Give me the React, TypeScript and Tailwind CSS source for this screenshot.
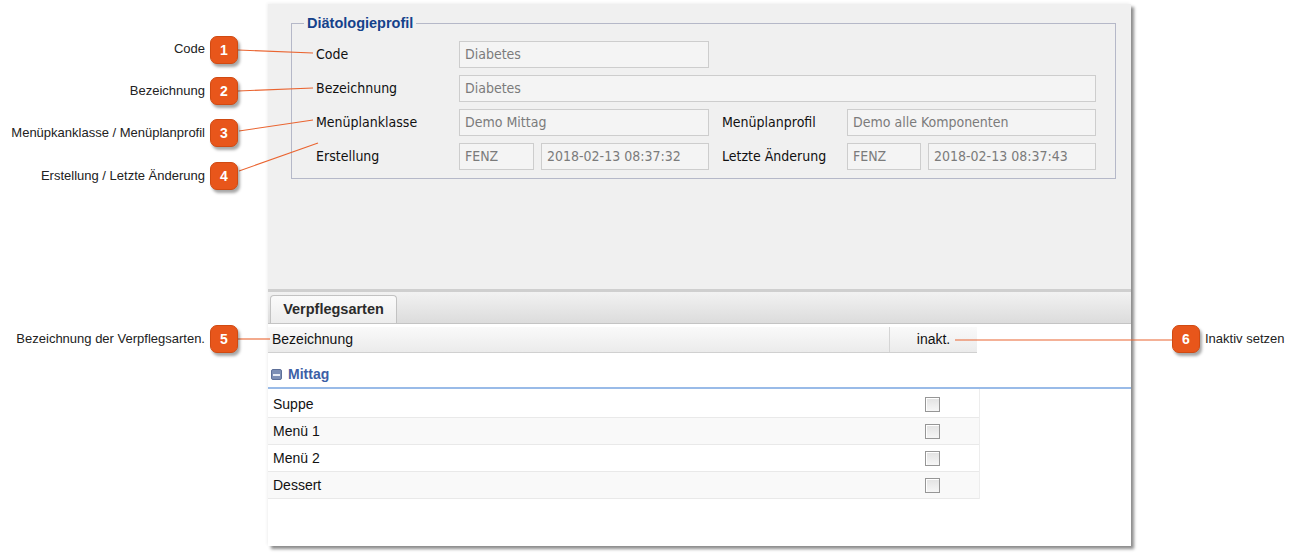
import React from "react";

const formFont = { fontFamily: '"DejaVu Sans Condensed", "Liberation Sans", Arial, sans-serif' };

function Field({ w, children }: { w: string; children: React.ReactNode }) {
  return (
    <div
      className={`${w} h-[27px] shrink-0 border border-[#cdcdcd] bg-[#f4f4f4] pl-[5px] flex items-center text-[14px] text-[#7b7b7b]`}
      style={formFont}
    >
      {children}
    </div>
  );
}

function Label({ w, children }: { w: string; children: React.ReactNode }) {
  return (
    <div className={`${w} shrink-0 text-[14px] text-[#111] -mt-[1px]`} style={formFont}>
      {children}
    </div>
  );
}

function Badge({ n, x, y }: { n: number; x: number; y: number }) {
  return (
    <div
      className="absolute w-[28px] h-[28px] rounded-[7px] bg-[#e8561b] border border-[#d04a12] shadow-[2px_3px_3px_rgba(0,0,0,0.35)] flex items-center justify-center text-white font-bold text-[14px]"
      style={{ left: x - 14, top: y - 14, fontFamily: '"Liberation Sans", Arial, sans-serif' }}
    >
      {n}
    </div>
  );
}

function Callout({ text, y }: { text: string; y: number }) {
  return (
    <div
      className="absolute right-[1095px] text-[13px] text-[#222] leading-[16px] whitespace-nowrap"
      style={{ top: y - 8, fontFamily: '"Liberation Sans", Arial, sans-serif' }}
    >
      {text}
    </div>
  );
}

function Checkbox() {
  return (
    <div className="w-[15px] h-[15px] border border-[#969696] bg-gradient-to-b from-[#e2e2e2] to-[#f6f6f6] shadow-[inset_1px_1px_0_#fff]" />
  );
}

export default function App() {
  const rows = ["Suppe", "Menü 1", "Menü 2", "Dessert"];
  return (
    <div className="relative w-[1300px] h-[555px] bg-white overflow-hidden flex">
      <div className="w-[268px] shrink-0" />
      <div
        className="mt-[4px] w-[863px] h-[542px] shrink-0 flex flex-col bg-white shadow-[3px_3px_3px_rgba(0,0,0,0.45),-1px_-1px_3px_rgba(0,0,0,0.06)]"
      >
        {/* top form section */}
        <div className="h-[285px] shrink-0 bg-[#f0f0f0] pt-[11px] pl-[23px]">
          <fieldset className="w-[825px] border border-[#b5b8c8] pb-[8px] m-0">
            <legend
              className="ml-[12px] px-[3px] text-[14.5px] leading-[16px] font-bold text-[#15428b]"
              style={{ fontFamily: '"Liberation Sans", Arial, sans-serif' }}
            >
              Diätologieprofil
            </legend>
            <div className="pl-[24px] pt-[10px] flex flex-col gap-[7px]">
              <div className="flex items-center">
                <Label w="w-[143px]">Code</Label>
                <Field w="w-[250px]">Diabetes</Field>
              </div>
              <div className="flex items-center">
                <Label w="w-[143px]">Bezeichnung</Label>
                <Field w="w-[637px]">Diabetes</Field>
              </div>
              <div className="flex items-center">
                <Label w="w-[143px]">Menüplanklasse</Label>
                <Field w="w-[250px]">Demo Mittag</Field>
                <div className="w-[13px] shrink-0" />
                <Label w="w-[125px]">Menüplanprofil</Label>
                <Field w="w-[249px]">Demo alle Komponenten</Field>
              </div>
              <div className="flex items-center">
                <Label w="w-[143px]">Erstellung</Label>
                <Field w="w-[75px]">FENZ</Field>
                <div className="w-[7px] shrink-0" />
                <Field w="w-[168px]">2018-02-13 08:37:32</Field>
                <div className="w-[13px] shrink-0" />
                <Label w="w-[125px]">Letzte Änderung</Label>
                <Field w="w-[74px]">FENZ</Field>
                <div className="w-[7px] shrink-0" />
                <Field w="w-[168px]">2018-02-13 08:37:43</Field>
              </div>
            </div>
          </fieldset>
        </div>
        {/* separator */}
        <div className="h-[3px] shrink-0 bg-[#cfcfcf]" />
        {/* tab strip */}
        <div className="h-[32px] shrink-0 bg-gradient-to-b from-[#f2f2f2] to-[#dcdcdc] border-b border-[#c4c4c4] flex items-end pl-[2px]">
          <div
            className="w-[127px] h-[28px] rounded-t-[4px] border border-b-0 border-[#c2c2c2] bg-gradient-to-b from-[#fbfbfb] to-[#ececec] flex items-center justify-center text-[14.5px] font-bold text-[#2b2b2b]"
            style={{ fontFamily: '"Liberation Sans", Arial, sans-serif' }}
          >
            Verpflegsarten
          </div>
        </div>
        {/* grid body */}
        <div
          className="flex-1 bg-white pt-[3px] flex flex-col"
          style={{ fontFamily: '"Liberation Sans", Arial, sans-serif' }}
        >
          <div className="w-[709px] h-[26px] flex bg-gradient-to-b from-[#fafafa] to-[#ebebeb] border-b border-[#d0d0d0] text-[14px] text-[#111]">
            <div className="flex-1 flex items-center pl-[4px]">Bezeichnung</div>
            <div className="w-[88px] border-l border-[#d5d5d5] flex items-center justify-center">inakt.</div>
          </div>
          <div className="h-[36px] flex items-center pl-[3px] pt-[9px] border-b-2 border-[#99bbe8]">
            <div className="w-[11px] h-[11px] rounded-[2px] bg-[#7d8fb5] border border-[#5d6f98] flex items-center justify-center">
              <div className="w-[7px] h-[2px] bg-[#e8ecf5]" />
            </div>
            <span className="ml-[6px] text-[14px] font-bold text-[#3d5fa6]">Mittag</span>
          </div>
          <div className="w-[712px] border-r border-[#ededed] pt-[2px]">
            {rows.map((r, i) => (
              <div
                key={r}
                className={`h-[27px] flex items-center border-b border-[#e9e9e9] text-[14px] text-[#111] ${i % 2 === 1 ? "bg-[#f9f9f9]" : "bg-white"}`}
              >
                <div className="flex-1 pl-[5px]">{r}</div>
                <div className="w-[88px] mr-[3px] flex justify-center">
                  <Checkbox />
                </div>
              </div>
            ))}
          </div>
        </div>
      </div>

      {/* annotation overlay */}
      <svg className="absolute inset-0 pointer-events-none" width="1300" height="555">
        <g stroke="#ea6430" strokeWidth="1.1" fill="none">
          <line x1="238" y1="50" x2="313" y2="53" />
          <line x1="238" y1="91" x2="313" y2="88" />
          <line x1="239" y1="131" x2="313" y2="120" />
          <line x1="239" y1="171" x2="318" y2="143" />
          <line x1="238" y1="339" x2="270" y2="339" />
          <line x1="955" y1="340" x2="1172" y2="340" />
        </g>
      </svg>
      <Callout text="Code" y={49} />
      <Callout text="Bezeichnung" y={91} />
      <Callout text="Menüpkanklasse / Menüplanprofil" y={133} />
      <Callout text="Erstellung / Letzte Änderung" y={176} />
      <Callout text="Bezeichnung der Verpflegsarten." y={339} />
      <Badge n={1} x={224} y={50} />
      <Badge n={2} x={224} y={91} />
      <Badge n={3} x={224} y={133} />
      <Badge n={4} x={224} y={176} />
      <Badge n={5} x={224} y={339} />
      <Badge n={6} x={1186} y={339} />
      <div
        className="absolute left-[1205px] top-[331px] text-[13px] leading-[16px] text-[#222]"
        style={{ fontFamily: '"Liberation Sans", Arial, sans-serif' }}
      >
        Inaktiv setzen
      </div>
    </div>
  );
}
